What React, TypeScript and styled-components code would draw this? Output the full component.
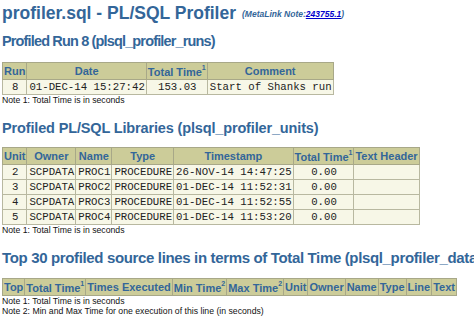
import React, { FC } from "react";
import styled, { createGlobalStyle } from "styled-components";

const GlobalStyle = createGlobalStyle`
  html, body {
    margin: 0;
    padding: 0;
    background: #ffffff;
  }
  body {
    font-family: "Liberation Sans", Arial, sans-serif;
    overflow: hidden;
  }
`;

const Page = styled.div`
  width: 474px;
  height: 319px;
  padding: 2px 0 0 2px;
  box-sizing: border-box;
  white-space: nowrap;
  overflow: hidden;
`;

const Title = styled.h1`
  margin: 0;
  font-size: 17.5px;
  line-height: 22px;
  font-weight: bold;
  color: #336699;
  display: flex;
  align-items: baseline;
  gap: 6px;
`;

const MetaLink = styled.span`
  font-size: 8.5px;
  font-style: italic;
  font-weight: bold;
  color: #336699;
  position: relative;
  top: -2px;

  a {
    color: #0000cc;
    text-decoration: underline;
  }
`;

const Heading = styled.h2<{ $top: number; $size?: number; $spacing?: number }>`
  margin: ${(p) => p.$top}px 0 0 0;
  font-size: ${(p) => p.$size || 14.5}px;
  letter-spacing: ${(p) => p.$spacing ?? -0.7}px;
  line-height: 18px;
  font-weight: bold;
  color: #336699;
`;

const Table = styled.table<{ $top: number }>`
  margin-top: ${(p) => p.$top}px;
  border-collapse: collapse;
  border: 1px solid #b0b090;
`;

const Th = styled.th`
  background: #cccc99;
  color: #336699;
  font-size: 11px;
  font-weight: bold;
  height: 16px;
  padding: 0 1px;
  border: 1px solid #a8a888;
  text-align: center;
  vertical-align: middle;

  sup {
    font-size: 7px;
    position: relative;
    top: -1px;
  }
`;

const Td = styled.td<{ $align?: string }>`
  background: #f7f7e7;
  font-family: "Liberation Mono", "Courier New", monospace;
  font-size: 10.7px;
  height: 14px;
  padding: 0 1px 0 2px;
  border: 1px solid #b8b8a0;
  text-align: ${(p) => p.$align || "left"};
  color: #222222;
`;

const Note = styled.div`
  font-size: 8.7px;
  line-height: 10px;
  color: #111111;
`;

const T1: FC = () => <>Total Time<sup>1</sup></>;

const units = [
  ["2", "SCPDATA", "PROC1", "PROCEDURE", "26-NOV-14 14:47:25"],
  ["3", "SCPDATA", "PROC2", "PROCEDURE", "01-DEC-14 11:52:31"],
  ["4", "SCPDATA", "PROC3", "PROCEDURE", "01-DEC-14 11:52:55"],
  ["5", "SCPDATA", "PROC4", "PROCEDURE", "01-DEC-14 11:53:20"],
];

export default function App() {
  return (
    <Page>
      <GlobalStyle />
      <Title>
        profiler.sql - PL/SQL Profiler
        <MetaLink>
          (MetaLink Note:<a href="#">243755.1</a>)
        </MetaLink>
      </Title>

      <Heading $top={5} $spacing={-0.85}>Profiled Run 8 (plsql_profiler_runs)</Heading>
      <Table $top={12}>
        <thead>
          <tr>
            <Th>Run</Th>
            <Th>Date</Th>
            <Th><T1 /></Th>
            <Th>Comment</Th>
          </tr>
        </thead>
        <tbody>
          <tr>
            <Td $align="center">8</Td>
            <Td>01-DEC-14 15:27:42</Td>
            <Td $align="center">153.03</Td>
            <Td>Start of Shanks run</Td>
          </tr>
        </tbody>
      </Table>
      <Note>Note 1: Total Time is in seconds</Note>

      <Heading $top={14} $spacing={-0.15}>
        Profiled PL/SQL Libraries (plsql_profiler_units)
      </Heading>
      <Table $top={10}>
        <thead>
          <tr>
            <Th>Unit</Th>
            <Th>Owner</Th>
            <Th>Name</Th>
            <Th>Type</Th>
            <Th>Timestamp</Th>
            <Th><T1 /></Th>
            <Th>Text Header</Th>
          </tr>
        </thead>
        <tbody>
          {units.map((u) => (
            <tr key={u[0]}>
              <Td $align="center">{u[0]}</Td>
              <Td>{u[1]}</Td>
              <Td>{u[2]}</Td>
              <Td>{u[3]}</Td>
              <Td>{u[4]}</Td>
              <Td $align="center">0.00</Td>
              <Td></Td>
            </tr>
          ))}
        </tbody>
      </Table>
      <Note>Note 1: Total Time is in seconds</Note>

      <Heading $top={14} $size={15} $spacing={-0.35}>
        Top 30 profiled source lines in terms of Total Time (plsql_profiler_data)
      </Heading>
      <Table $top={11}>
        <thead>
          <tr>
            <Th>Top</Th>
            <Th><T1 /></Th>
            <Th>Times Executed</Th>
            <Th>Min Time<sup>2</sup></Th>
            <Th>Max Time<sup>2</sup></Th>
            <Th>Unit</Th>
            <Th>Owner</Th>
            <Th>Name</Th>
            <Th>Type</Th>
            <Th>Line</Th>
            <Th>Text</Th>
          </tr>
        </thead>
      </Table>
      <Note>Note 1: Total Time is in seconds</Note>
      <Note>Note 2: Min and Max Time for one execution of this line (in seconds)</Note>
    </Page>
  );
}
